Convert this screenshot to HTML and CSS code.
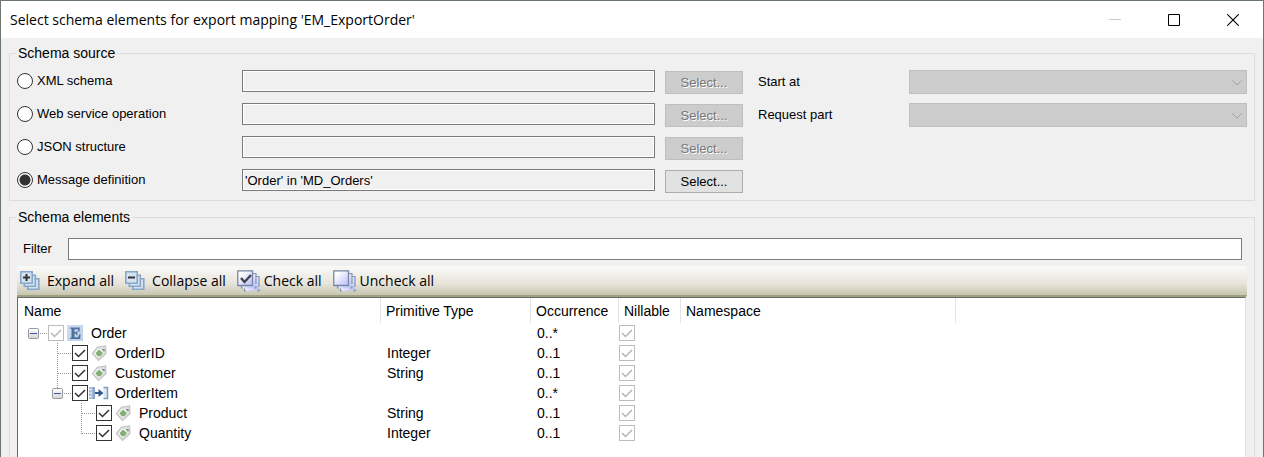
FILE: index.html
```html
<!DOCTYPE html>
<html lang="en">
<head>
<meta charset="utf-8">
<title>Select schema elements for export mapping 'EM_ExportOrder'</title>
<link rel="stylesheet" href="styles.css">
</head>
<body>
<svg class="defs" aria-hidden="true">
  <defs>
    <linearGradient id="page" x1="0" y1="0" x2="1" y2="1"><stop offset=".2" stop-color="#fff"/><stop offset="1" stop-color="#b9bcf8"/></linearGradient>
    <linearGradient id="tagfill" x1="0" y1="0" x2="1" y2="1"><stop offset="0" stop-color="#fff"/><stop offset="1" stop-color="#d4d4d4"/></linearGradient>
    <linearGradient id="btnfill" x1="0" y1="0" x2="0" y2="1"><stop offset="0" stop-color="#fff"/><stop offset="1" stop-color="#d5d5d5"/></linearGradient>
    <linearGradient id="efill" x1="0" y1="0" x2="1" y2="1"><stop offset="0" stop-color="#d6e3f2"/><stop offset="1" stop-color="#b4c9e2"/></linearGradient>
    <symbol id="stack" viewBox="0 0 20 20">
      <g fill="#d5e3f1" stroke="#86a6ca" stroke-width="1.6"><path d="M7.800 7.800h11v10.400h-11z"/><path d="M4.300 4.300h11v10.900h-11z"/><path d="M.8.8h11.400v11.400H.8z"/></g>
    </symbol>
    <symbol id="pages" viewBox="0 0 23 22">
      <g fill="url(#page)"><path d="M7.500 6.500h14.500v14.500h-14.500z"/><path d="M18 6.500h4V17M22 19v2h-2M9 21H7.500v-2.500" fill="none" stroke="#8496b0" stroke-width="1.200"/><path d="M4.500 3.500h14.500v14.500h-14.500z"/><path d="M15.500 3.500H19V14M19 16v2h-2M6 18H4.500v-2.500" fill="none" stroke="#8496b0" stroke-width="1.200"/><path d="M.8.8h14.700v14.700H.8z" stroke="#7387a3" stroke-width="1.300"/></g>
    </symbol>
    <symbol id="tag" viewBox="0 0 24 20">
      <path d="M4.500 10.500 9.500 4.300 17.500 3 18 10.500 10.500 17.500z" fill="url(#tagfill)" stroke="#c2c2c2" stroke-width="1.200"/>
      <path d="M9.500 5.500 16.500 4.500" stroke="#d9d9d9"/>
      <path d="M11 6.800 14.800 10.200 12.200 13.300 9.800 13 7.500 10.200z" fill="#78ad68"/>
      <path d="m9.200 8.500 4.200 4.200" stroke="#9bc18d"/>
      <path d="M14 6.500h2v2" fill="none" stroke="#777" stroke-width="1.200"/>
    </symbol>
    <symbol id="elem" viewBox="0 0 24 20">
      <path d="M3 2h16v16H3z" fill="url(#efill)"/><path d="M4 3h14v14H4z" fill="none" stroke="#c7d8eb" stroke-width="1"/>
      <path d="M6 4.500h9.700v4h-1.200l-.7-2.200h-3.300v3h1.500l.5-1.300h.9v4.300h-.9l-.5-1.600h-1.500v3.500h3.700l1-2.800h1.300l-.4 4.600H6v-1.200h1.500v-9H6z" fill="#4f719f"/>
    </symbol>
    <symbol id="group" viewBox="0 0 24 20">
      <path d="M1 4h6v12H1z" fill="#a9bfda"/><path d="M1 6.500h3m-3 3.500h3m-3 3.500h3" stroke="#eef3f9" stroke-width="1.200"/><path d="M4.500 4.800H6v10.400H4.500" fill="none" stroke="#6f8fb8"/>
      <path d="M7 10h5" stroke="#31598f" stroke-width="2"/><path d="m10.500 6 5 4-5 4z" fill="#31598f"/>
      <path d="M15.500 4.500h4v11h-4" fill="#dce7f3" stroke="#7d9cc1" stroke-width="1.500"/>
    </symbol>
    <symbol id="dash" viewBox="0 0 20 20"><path d="M12 10.500h8" stroke="#999" stroke-dasharray="1 1"/></symbol>
    <symbol id="vline" viewBox="0 0 20 20"><path d="M5.500 0v20" stroke="#999" stroke-dasharray="1 1"/></symbol>
    <symbol id="branch" viewBox="0 0 20 20"><path d="M6 10.500h14" stroke="#999" stroke-dasharray="1 1"/></symbol>
    <symbol id="last" viewBox="0 0 20 20"><path d="M5.500 0v11M6 10.500h14" stroke="#999" stroke-dasharray="1 1"/></symbol>
    <symbol id="minus" viewBox="0 0 11 11"><rect x=".5" y=".5" width="10" height="10" rx="1" fill="url(#btnfill)" stroke="#999"/><path d="M2 5.500h7" stroke="#3c58ae"/></symbol>
    <symbol id="stub" viewBox="0 0 20 20"><path d="M5.500 0v5" stroke="#999" stroke-dasharray="1 1"/></symbol>
  </defs>
</svg>
<div class="window">
  <header class="titlebar">
    <h1 class="title">Select schema elements for export mapping 'EM_ExportOrder'</h1>
    <div class="controls">
      <button type="button" class="control" aria-label="Minimize" disabled><svg width="12" height="12"><path d="M0 5.500h12" stroke="#ccc"/></svg></button>
      <button type="button" class="control" aria-label="Maximize"><svg width="12" height="12"><path d="M.5.5h11v11H.5z" fill="none" stroke="#000"/></svg></button>
      <button type="button" class="control" aria-label="Close"><svg width="12" height="12"><path d="m.3.3 11.400 11.400M11.700.3.3 11.700" stroke="#000" stroke-width="1.100"/></svg></button>
    </div>
  </header>
  <main class="content">
    <fieldset class="group">
      <legend class="legend">Schema source</legend>
      <div class="sources">
        <label class="option"><input class="radio" type="radio" name="source">XML schema</label>
        <input class="box readonly" type="text" readonly aria-label="XML schema">
        <button type="button" class="pick" disabled>Select...</button>
        <label class="side" for="start">Start at</label>
        <div class="combo"><select class="select" id="start" disabled></select><svg class="chevron" width="10" height="6"><path d="m.5.5 4.500 4.500L9.500.5" fill="none" stroke="#a3a3a3"/></svg></div>

        <label class="option"><input class="radio" type="radio" name="source">Web service operation</label>
        <input class="box readonly" type="text" readonly aria-label="Web service operation">
        <button type="button" class="pick" disabled>Select...</button>
        <label class="side" for="part">Request part</label>
        <div class="combo"><select class="select" id="part" disabled></select><svg class="chevron" width="10" height="6"><path d="m.5.5 4.500 4.500L9.500.5" fill="none" stroke="#a3a3a3"/></svg></div>

        <label class="option"><input class="radio" type="radio" name="source">JSON structure</label>
        <input class="box readonly" type="text" readonly aria-label="JSON structure">
        <button type="button" class="pick" disabled>Select...</button>

        <label class="option"><input class="radio" type="radio" name="source" checked>Message definition</label>
        <input class="box readonly" type="text" readonly aria-label="Message definition" value="'Order' in 'MD_Orders'">
        <button type="button" class="pick">Select...</button>
      </div>
    </fieldset>
    <fieldset class="group elements">
      <legend class="legend">Schema elements</legend>
      <div class="filter">
        <label class="filter-label" for="filter">Filter</label>
        <input class="box" id="filter" type="text">
      </div>
      <div class="toolbar">
        <button type="button" class="tool"><svg width="20" height="20"><use href="#stack"/><path d="M3 6.500h7M6.500 3v7" stroke="#333" stroke-width="2"/></svg>Expand all</button>
        <button type="button" class="tool"><svg width="20" height="20"><use href="#stack"/><path d="M3 6.500h7" stroke="#333" stroke-width="2"/></svg>Collapse all</button>
        <button type="button" class="tool tool-check"><svg width="23" height="22"><use href="#pages"/><path d="m4 8 3.500 4L14 5" fill="none" stroke="#444" stroke-width="2.400"/></svg>Check all</button>
        <button type="button" class="tool tool-check"><svg width="23" height="22"><use href="#pages"/></svg>Uncheck all</button>
      </div>
      <div class="tree">
        <table class="table">
          <colgroup><col class="c-name"><col class="c-type"><col class="c-occ"><col class="c-nil"><col class="c-ns"><col></colgroup>
          <thead>
            <tr><th>Name</th><th>Primitive Type</th><th>Occurrence</th><th>Nillable</th><th>Namespace</th><th></th></tr>
          </thead>
          <tbody>
            <tr>
              <td><div class="node"><span class="joint"><svg width="20" height="20"><use href="#dash"/></svg><button type="button" class="toggle" aria-label="Collapse Order"><svg width="11" height="11"><use href="#minus"/></svg></button></span><label class="item"><input class="check" type="checkbox" checked disabled><svg width="24" height="20"><use href="#elem"/></svg>Order</label></div></td>
              <td></td><td>0..*</td><td class="nil"><input class="check" type="checkbox" checked disabled aria-label="Order nillable"></td><td></td><td></td>
            </tr>
            <tr>
              <td><div class="node level-1"><span class="joint"><svg width="20" height="20"><use href="#vline"/><use href="#branch"/></svg></span><label class="item"><input class="check" type="checkbox" checked><svg width="24" height="20"><use href="#tag"/></svg>OrderID</label></div></td>
              <td>Integer</td><td>0..1</td><td class="nil"><input class="check" type="checkbox" checked disabled aria-label="OrderID nillable"></td><td></td><td></td>
            </tr>
            <tr>
              <td><div class="node level-1"><span class="joint"><svg width="20" height="20"><use href="#vline"/><use href="#branch"/></svg></span><label class="item"><input class="check" type="checkbox" checked><svg width="24" height="20"><use href="#tag"/></svg>Customer</label></div></td>
              <td>String</td><td>0..1</td><td class="nil"><input class="check" type="checkbox" checked disabled aria-label="Customer nillable"></td><td></td><td></td>
            </tr>
            <tr>
              <td><div class="node level-1"><span class="joint"><svg width="20" height="20"><use href="#stub"/><use href="#dash"/></svg><button type="button" class="toggle" aria-label="Collapse OrderItem"><svg width="11" height="11"><use href="#minus"/></svg></button></span><label class="item"><input class="check" type="checkbox" checked><svg width="24" height="20"><use href="#group"/></svg>OrderItem</label></div></td>
              <td></td><td>0..*</td><td class="nil"><input class="check" type="checkbox" checked disabled aria-label="OrderItem nillable"></td><td></td><td></td>
            </tr>
            <tr>
              <td><div class="node level-2"><span class="joint"><svg width="20" height="20"><use href="#vline"/><use href="#branch"/></svg></span><label class="item"><input class="check" type="checkbox" checked><svg width="24" height="20"><use href="#tag"/></svg>Product</label></div></td>
              <td>String</td><td>0..1</td><td class="nil"><input class="check" type="checkbox" checked disabled aria-label="Product nillable"></td><td></td><td></td>
            </tr>
            <tr>
              <td><div class="node level-2"><span class="joint"><svg width="20" height="20"><use href="#last"/></svg></span><label class="item"><input class="check" type="checkbox" checked><svg width="24" height="20"><use href="#tag"/></svg>Quantity</label></div></td>
              <td>Integer</td><td>0..1</td><td class="nil"><input class="check" type="checkbox" checked disabled aria-label="Quantity nillable"></td><td></td><td></td>
            </tr>
          </tbody>
        </table>
      </div>
    </fieldset>
  </main>
</div>
</body>
</html>
```
FILE: styles.css
```css
* { box-sizing: border-box; }
body { margin: 0; background: #f0f0f0; color: #000; font: 13px/16px "Liberation Sans", Arial, sans-serif; }
button, input, select { margin: 0; font: inherit; color: inherit; }
svg { display: block; flex: none; }
.defs { position: absolute; width: 0; height: 0; }

.window { display: flex; flex-direction: column; min-height: 100vh; border: 1px solid #6b776d; border-bottom: 0; }

.titlebar { display: flex; align-items: center; justify-content: space-between; height: 37px; padding: 0 1px 0 9px; background: #fff; }
.title { margin: 0; font: 400 14px/20px "Open Sans", "Noto Sans", sans-serif; }
.controls { display: flex; align-self: stretch; }
.control { display: flex; align-items: center; justify-content: center; width: 59px; padding: 0; border: 0; background: none; }

.content { flex: 1; display: flex; flex-direction: column; gap: 9px; padding: 8px 8px 0; }
.group { min-width: 0; margin: 0; padding: 9px 7px 7px; border: 1px solid #dcdcdc; }
.legend { margin-left: -1px; padding: 0 2px; line-height: 15px; font-size: 14px; }

.sources { display: grid; grid-template-columns: 215px minmax(0, 413fr) 78px 146px minmax(0, 338fr); grid-auto-rows: 24px; gap: 9px 10px; }
.option { grid-column: 1; display: flex; align-items: center; gap: 4px; height: 22px; }
.radio { appearance: none; width: 16px; height: 16px; border: 1px solid #333; border-radius: 50%; background: #fff; }
.radio:checked { background: radial-gradient(circle, #333 5px, #fff 6px); }
.box { min-width: 0; height: 22px; padding: 0 2px; border: 1px solid #7a7a7a; border-radius: 0; background: #fff; }
.readonly { background: #f0f0f0; box-shadow: inset 0 0 0 1px #fff; }
.pick { align-self: end; height: 23px; padding: 0; border: 1px solid #adadad; background: #e1e1e1; }
.pick:disabled { border-color: #bfbfbf; background: #ccc; color: #777; text-shadow: 1px 1px #fff; }
.side { align-self: center; padding-left: 5px; }
.combo { position: relative; }
.select { appearance: none; display: block; width: 100%; height: 24px; border: 1px solid #bfbfbf; border-radius: 0; background: #ccc; opacity: 1; }
.chevron { position: absolute; top: 10px; right: 5px; pointer-events: none; }

.elements { padding-top: 13px; padding-bottom: 0; border-bottom: 0; }
.filter { display: flex; align-items: center; padding: 0 5px 0 6px; }
.filter-label { width: 45px; }
.filter .box { flex: 1; }

.toolbar { display: flex; align-items: center; gap: 11px; height: 31px; margin-top: 6px; padding: 0 3px; border-bottom: 2px solid #a0a080; border-radius: 3px 3px 2px 0; background: linear-gradient(#fafaf7, #e8e4dc 60%, #c6c6b0); }
.tool { display: flex; align-items: center; gap: 7px; padding: 0; border: 0; background: none; font: 14px/20px "Open Sans", "Noto Sans", sans-serif; white-space: nowrap; }
.tool-check { gap: 4px; }

.tree { margin-right: 1px; padding-bottom: 14px; border: 1px solid #696969; border-right-color: #e3e3e3; border-bottom: 0; background: #fff; }
.table { width: 100%; table-layout: fixed; border-collapse: separate; border-spacing: 0; font-size: 14px; line-height: 20px; text-align: left; }
.c-name { width: 363px; }
.c-type { width: 150px; }
.c-occ { width: 88px; }
.c-nil { width: 62px; }
.c-ns { width: 275px; }
.table th { height: 25px; padding: 3px 5px 2px; border-right: 1px solid #e5e5e5; font-weight: 400; }
.table th:first-child { padding-left: 6px; }
.table th:last-child { border-right: 0; }
.table td { height: 20px; padding: 0 6px; }
.table td:first-child { padding: 0 0 0 10px; }
.table td.nil { padding: 0; }
.node { display: flex; }
.level-1 { padding-left: 24px; }
.level-2 { padding-left: 48px; }
.joint { display: flex; position: relative; }
.toggle { position: absolute; left: 0; top: 5px; padding: 0; border: 0; background: none; }
.item { display: flex; align-items: center; }
.item svg { margin-right: 3px; }
.check { appearance: none; display: block; flex: none; width: 16px; height: 16px; border: 1px solid #333; background: #fff url("data:image/svg+xml,%3Csvg xmlns='http://www.w3.org/2000/svg' width='14' height='14'%3E%3Cpath d='m2 7 3.500 3.500L12 4' fill='none' stroke='%23333' stroke-width='1.500'/%3E%3C/svg%3E"); }
.check:disabled { border-color: #bcbcbc; background-image: url("data:image/svg+xml,%3Csvg xmlns='http://www.w3.org/2000/svg' width='14' height='14'%3E%3Cpath d='m2 7 3.500 3.500L12 4' fill='none' stroke='%23b5b5b5' stroke-width='1.500'/%3E%3C/svg%3E"); }
```
